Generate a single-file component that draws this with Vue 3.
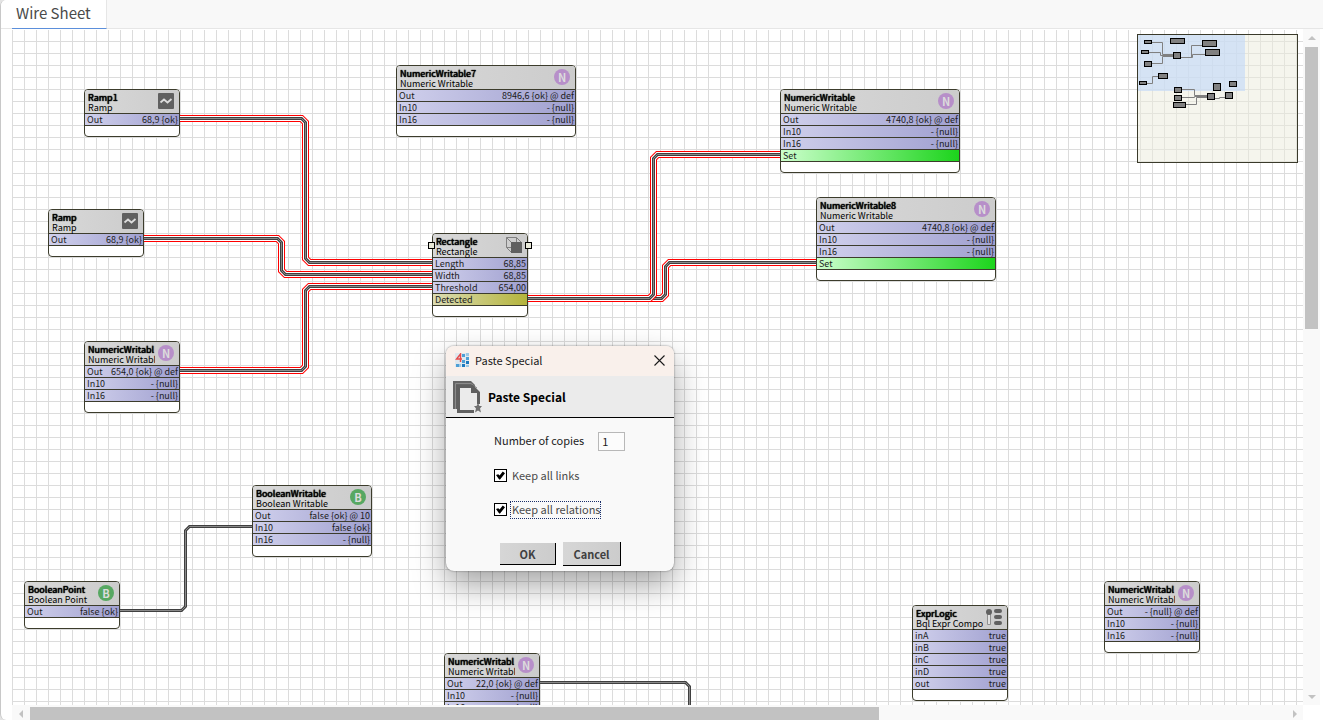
<script setup>
import { reactive, ref } from 'vue'

const nul = '- {null}'
const nodes = [
  { x: 72, y: 60, w: 96, name: 'Ramp1', type: 'Ramp', icon: 'ramp', rows: [['Out', '68,9 {ok}']] },
  { x: 36, y: 180, w: 96, name: 'Ramp', type: 'Ramp', icon: 'ramp', rows: [['Out', '68,9 {ok}']] },
  { x: 72, y: 312, w: 96, name: 'NumericWritabl', type: 'Numeric Writabl', icon: 'N', rows: [['Out', '654,0 {ok} @ def'], ['In10', nul], ['In16', nul]] },
  { x: 384, y: 36, w: 180, name: 'NumericWritable7', type: 'Numeric Writable', icon: 'N', rows: [['Out', '8946,6 {ok} @ def'], ['In10', nul], ['In16', nul]] },
  { x: 768, y: 60, w: 180, name: 'NumericWritable', type: 'Numeric Writable', icon: 'N', rows: [['Out', '4740,8 {ok} @ def'], ['In10', nul], ['In16', nul], ['Set', '', 'green']] },
  { x: 804, y: 168, w: 180, name: 'NumericWritable8', type: 'Numeric Writable', icon: 'N', rows: [['Out', '4740,8 {ok} @ def'], ['In10', nul], ['In16', nul], ['Set', '', 'green']] },
  { x: 420, y: 204, w: 96, name: 'Rectangle', type: 'Rectangle', icon: 'cube', selected: true, rows: [['Length', '68,85'], ['Width', '68,85'], ['Threshold', '654,00'], ['Detected', '', 'olive']] },
  { x: 240, y: 456, w: 120, name: 'BooleanWritable', type: 'Boolean Writable', icon: 'B', rows: [['Out', 'false {ok} @ 10'], ['In10', 'false {ok}'], ['In16', nul]] },
  { x: 12, y: 552, w: 96, name: 'BooleanPoint', type: 'Boolean Point', icon: 'B', rows: [['Out', 'false {ok}']] },
  { x: 432, y: 624, w: 96, name: 'NumericWritabl', type: 'Numeric Writabl', icon: 'N', rows: [['Out', '22,0 {ok} @ def'], ['In10', nul], ['In16', nul]] },
  { x: 900, y: 576, w: 96, name: 'ExprLogic', type: 'Bql Expr Compo', icon: 'expr', rows: [['inA', 'true'], ['inB', 'true'], ['inC', 'true'], ['inD', 'true'], ['out', 'true']] },
  { x: 1092, y: 552, w: 96, name: 'NumericWritabl', type: 'Numeric Writabl', icon: 'N', rows: [['Out', '- {null} @ def'], ['In10', nul], ['In16', nul]] },
]

const wires = [
  { hot: true, d: 'M168 89.5H289.5L293.5 93.5V229.5L297.5 233.5H420' },
  { hot: true, d: 'M132 209.5H265.5L269.5 213.5V241.5L273.5 245.5H420' },
  { hot: true, d: 'M168 341.5H289.5L293.5 337.5V261.5L297.5 257.5H420' },
  { hot: true, d: 'M516 269.5H649.5L653.5 265.5V237.5L657.5 233.5H804' },
  { hot: true, d: 'M516 269.5H637.5L641.5 265.5V129.5L645.5 125.5H768' },
  { hot: false, d: 'M108 581.5H169.5L173.5 577.5V501.5L177.5 497.5H240' },
  { hot: false, d: 'M528 653.5H673.5L677.5 657.5V700' },
]

const mapBoxes = [
  [7, 6, 8, 4], [33, 4, 15, 6], [65, 6, 15, 7], [4, 16, 8, 4], [36, 18, 8, 7], [68, 15, 15, 7],
  [7, 27, 8, 6], [21, 39, 10, 6], [2, 47, 8, 4], [37, 53, 8, 6], [37, 61, 8, 6], [36, 68, 13, 6],
  [70, 59, 8, 7], [76, 49, 8, 8], [88, 58, 8, 7], [92, 47, 8, 6],
]
const mapLines =
  'M15 8.5H25.5V20.5H36M12 18.5H23.5V21.5H36M15 29.5H25.5V22.5H36M44 23.5H54.5V11.5H65M44 23.5H55.5V20.5H68' +
  'M10 49.5H15.5V42.5H21M45 55.5H57.5V61.5H70M45 63.5H57.5V62.5H70M49 70.5H59.5V63.5H70M78 64.5H82.5V63.5H88'

const place = (n) => ({ left: n.x + 'px', top: n.y + 'px', width: n.w + 'px' })

const copies = ref('1')
const keep = reactive({ links: true, relations: true })
</script>

<template>
  <main class="window">
    <nav class="tabs">
      <a class="tab" href="#sheet">Wire Sheet</a>
    </nav>

    <div class="work">
      <section id="sheet" class="sheet">
        <svg class="wires" aria-hidden="true">
          <g v-for="(w, i) in wires" :key="i" fill="none">
            <path v-if="w.hot" :d="w.d" stroke="#ff0000" stroke-width="7" />
            <path v-if="w.hot" :d="w.d" stroke="#ffffff" stroke-width="5" />
            <path :d="w.d" stroke="#404040" stroke-width="3" />
            <path :d="w.d" stroke="#8a8a8a" stroke-width="1" />
          </g>
        </svg>

        <article v-for="n in nodes" :key="n.x + '-' + n.y" class="node" :style="place(n)">
          <header class="head">
            <div class="names">
              <strong>{{ n.name }}</strong>
              <span>{{ n.type }}</span>
            </div>
            <span v-if="n.icon === 'N' || n.icon === 'B'" class="dot" :class="n.icon">{{ n.icon }}</span>
            <svg v-else-if="n.icon === 'ramp'" class="icon" viewBox="0 0 16 16">
              <rect width="16" height="16" rx="1" fill="#606060" />
              <path d="M2.5 9.5L6 6.5L9.5 9.5L13.5 6" fill="none" stroke="#dcdcdc" stroke-width="1.8" />
            </svg>
            <svg v-else-if="n.icon === 'cube'" class="icon" viewBox="0 0 16 16">
              <path d="M0.5 0.5H10.5L15.5 5.5M0.5 0.5V10.5L5.5 15.5M0.5 0.5L5.5 5.5M10.5 0.5V5M0.5 10.5H5" fill="none" stroke="#808080" />
              <rect x="5" y="5" width="11" height="11" fill="#606060" />
            </svg>
            <svg v-else class="icon" viewBox="0 0 16 16">
              <path d="M1.5 5V15.5H4.5V5" fill="#e2e2e2" stroke="#909090" />
              <circle cx="3" cy="3" r="3" fill="#606060" />
              <rect x="8" y="0" width="8" height="4" rx="2" fill="#606060" />
              <rect x="8" y="6" width="8" height="4" rx="2" fill="#606060" />
              <rect x="8" y="12" width="8" height="4" rx="2" fill="#606060" />
            </svg>
          </header>
          <div v-for="r in n.rows" :key="r[0]" class="slot" :class="r[2]">
            <span>{{ r[0] }}</span><span>{{ r[1] }}</span>
          </div>
          <div class="foot"></div>
          <template v-if="n.selected">
            <i class="handle west"></i>
            <i class="handle east"></i>
          </template>
        </article>

        <svg class="map" width="161" height="129" viewBox="0 0 161 129">
          <rect x="0.5" y="0.5" width="160" height="128" fill="#ecebdb" fill-opacity="0.5" />
          <rect x="1" y="1" width="107" height="56" fill="#c3d9f8" fill-opacity="0.65" />
          <path :d="mapLines" fill="none" stroke="#808080" />
          <rect v-for="(b, i) in mapBoxes" :key="i" :x="b[0] + 0.5" :y="b[1] + 0.5" :width="b[2] - 1" :height="b[3] - 1" fill="#808080" stroke="#000000" />
          <rect x="0.5" y="0.5" width="160" height="128" fill="none" stroke="#3a3a2a" />
        </svg>

        <form class="dialog" role="dialog" aria-labelledby="dialog-title" @submit.prevent>
          <div class="titlebar">
            <svg width="14" height="14" viewBox="0 0 14 14" aria-hidden="true">
              <rect width="14" height="14" fill="#dfe8ee" />
              <path d="M7 1h3v3H7zM11 4h3v3h-3zM7 7h3v3H7zM1 11h3v3H1z" fill="#4d9fd6" />
              <path d="M11 8h3v3h-3zM7 11h3v3H7z" fill="#1c78bd" />
              <path d="M11 0h3v3h-3zM11 12h3v2h-3zM4 11h2v3H4z" fill="#9cc8e4" />
              <path d="M5.5 9V1L1.5 6H7" fill="none" stroke="#e64a4a" stroke-width="1.4" />
            </svg>
            <span id="dialog-title">Paste Special</span>
            <button type="button" class="close" aria-label="Close">
              <svg width="11" height="11" viewBox="0 0 11 11"><path d="M0.5 0.5L10.5 10.5M10.5 0.5L0.5 10.5" stroke="#1a1a1a" stroke-width="1.1" /></svg>
            </button>
          </div>
          <div class="banner">
            <svg width="29" height="32" viewBox="0 0 29 32" aria-hidden="true">
              <path d="M0 0H18L22 4V6H4V28H0z" fill="#666666" />
              <path d="M2.5 28V2.500H18L24 7" fill="none" stroke="#8c8c8c" />
              <path d="M3 4H20L27 11V23H24V12H18V7H7V29H21V32H4V28H3z" fill="#606060" />
              <path d="M7 7H18V12H24V23L21 29H7z" fill="#ebebeb" />
              <path d="M25 22l1.500 3h2.500l-2 2.500l1 4l-3-2l-3 2l1-4l-2-2.500h2.500z" fill="#707070" />
            </svg>
            <h1>Paste Special</h1>
          </div>
          <div class="fields">
            <div class="field">
              <label for="copies">Number of copies</label>
              <input id="copies" v-model="copies" type="text" />
            </div>
            <div class="field">
              <input id="links" v-model="keep.links" type="checkbox" />
              <label for="links" class="opt">Keep all links</label>
            </div>
            <div class="field">
              <input id="relations" v-model="keep.relations" type="checkbox" />
              <label for="relations" class="opt focused">Keep all relations</label>
            </div>
          </div>
          <div class="actions">
            <button type="submit" class="btn ok">OK</button>
            <button type="button" class="btn cancel">Cancel</button>
          </div>
        </form>
      </section>

      <div class="bar vertical">
        <button type="button" aria-label="Scroll up"><svg width="8" height="4" viewBox="0 0 8 4"><path d="M0 4L4 0L8 4z" /></svg></button>
        <div class="track"><div class="thumb"></div></div>
        <button type="button" aria-label="Scroll down"><svg width="8" height="4" viewBox="0 0 8 4"><path d="M0 0L4 4L8 0z" /></svg></button>
      </div>
      <div class="bar horizontal">
        <button type="button" aria-label="Scroll left"><svg width="4" height="8" viewBox="0 0 4 8"><path d="M4 0L0 4L4 8z" /></svg></button>
        <div class="track"><div class="thumb"></div></div>
        <button type="button" aria-label="Scroll right"><svg width="4" height="8" viewBox="0 0 4 8"><path d="M0 0L4 4L0 8z" /></svg></button>
      </div>
    </div>
  </main>
</template>

<style>
body {
  background: #e4e4e4;
}
</style>

<style scoped>
.window {
  box-sizing: border-box;
  display: flex;
  flex-direction: column;
  height: 100vh;
  overflow: hidden;
  background: #ffffff;
  border-left: 1px solid #c8c8c8;
  border-radius: 6px 0 0 6px;
  font-family: "Noto Sans CJK SC", "Noto Sans", sans-serif;
  color: #1c1c1c;
}
.window * {
  box-sizing: border-box;
}
.tabs {
  display: flex;
  height: 29px;
  flex: none;
  padding-left: 11px;
  background: linear-gradient(to right, #ffffff 11px, #f8f8f8 11px);
  border-bottom: 1px solid #e6e6e6;
}
.tab {
  height: 29px;
  padding: 0 15px 0 4px;
  background: #ffffff;
  border-bottom: 1px solid #5b8fdb;
  border-right: 1px solid #e6e6e6;
  color: #4a4a4a;
  font-size: 15px;
  line-height: 25px;
  text-decoration: none;
  white-space: nowrap;
}
.work {
  flex: 1;
  min-height: 0;
  display: grid;
  grid-template-columns: 1fr 17px;
  grid-template-rows: 1fr 15px;
  padding: 0 3px 0 11px;
}
.sheet {
  position: relative;
  overflow: hidden;
  background: #ffffff;
}
.sheet::before {
  content: "";
  position: absolute;
  inset: 1px 0 0 0;
  background-image:
    linear-gradient(to right, #dcdcdc 1px, transparent 1px),
    linear-gradient(to bottom, #dcdcdc 1px, transparent 1px);
  background-position: 0 -1px;
  background-size: 12px 12px;
}
.wires {
  position: absolute;
  inset: 0;
  width: 100%;
  height: 100%;
}
.node {
  position: absolute;
  border: 1px solid #3c3c2c;
  border-radius: 4px;
  background: #ffffff;
  font-size: 9px;
}
.head {
  display: flex;
  justify-content: space-between;
  height: 23px;
  padding: 3px 5px 0 3px;
  border-radius: 3px 3px 0 0;
  background: linear-gradient(to right, #d8d8d8, #cccccc);
}
.names {
  flex: 1;
  min-width: 0;
  overflow-x: clip;
  margin-right: 3px;
  line-height: 10px;
  white-space: nowrap;
  color: #000000;
}
.names strong,
.names span {
  display: block;
}
.names strong {
  font-weight: 400;
  text-shadow: 0 0 1px #000000, 0 0 1px #000000;
}
.icon,
.dot {
  flex: none;
  width: 16px;
  height: 16px;
}
.dot {
  border-radius: 50%;
  font-size: 11px;
  font-weight: bold;
  line-height: 16px;
  text-align: center;
  color: #dcdcdc;
}
.dot.N {
  background: #b78fc9;
}
.dot.B {
  background: #57a862;
}
.slot {
  display: flex;
  justify-content: space-between;
  height: 12px;
  padding: 0 1px 0 2px;
  border-top: 1px solid #3c3c2c;
  background: linear-gradient(to right, #d0d0ec, #a0a0d0);
  line-height: 11px;
  white-space: nowrap;
}
.slot.green {
  background: linear-gradient(to right, #ccffcc, #1cd41c);
}
.slot.olive {
  background: linear-gradient(to right, #dcdcb4, #b4b43c);
}
.foot {
  height: 11px;
  border-top: 1px solid #3c3c2c;
}
.handle {
  position: absolute;
  top: 8px;
  width: 7px;
  height: 7px;
  border: 1px solid #000000;
  background: #e8e8d8;
}
.handle.west {
  left: -5px;
}
.handle.east {
  right: -5px;
}
.map {
  position: absolute;
  top: 5px;
  right: 5px;
}
.dialog {
  position: absolute;
  left: 434px;
  top: 317px;
  width: 228px;
  overflow: hidden;
  border-radius: 8px;
  background: #f9f9f9;
  box-shadow: 0 0 2px rgba(0, 0, 0, 0.5), 0 14px 32px rgba(0, 0, 0, 0.36);
  font-size: 11px;
}
.titlebar {
  display: flex;
  align-items: center;
  gap: 6px;
  height: 30px;
  padding: 0 9px 2px 9px;
  background: #f9f0eb;
  color: #1a1a1a;
}
.close {
  display: flex;
  margin-left: auto;
  padding: 0;
  border: 0;
  background: none;
}
.banner {
  display: flex;
  align-items: center;
  gap: 6px;
  height: 42px;
  padding: 0 7px;
  border-bottom: 1px solid #000000;
  background: #ebebeb;
}
.banner h1 {
  margin: 0;
  font-size: 12px;
  font-weight: bold;
  color: #000000;
}
.fields {
  display: flex;
  flex-direction: column;
  gap: 15px;
  padding: 14px 48px 0;
}
.field {
  display: flex;
  align-items: center;
  height: 19px;
  line-height: 14px;
  white-space: nowrap;
}
.field label {
  padding-bottom: 3px;
}
.field input[type="text"] {
  width: 27px;
  height: 19px;
  margin-left: 14px;
  padding: 0 3px 2px;
  border: 1px solid #b8b8b8;
  background: #fcfcfc;
  font-family: inherit;
  font-size: 11px;
  color: #1c1c1c;
}
.field input[type="checkbox"] {
  appearance: none;
  flex: none;
  width: 13px;
  height: 13px;
  margin: 0 3px 0 0;
  border: 1px solid #000000;
  background: #ffffff;
  display: grid;
  place-items: center;
}
.field input[type="checkbox"]:checked::before {
  content: "";
  width: 9px;
  height: 9px;
  background: #000000;
  clip-path: polygon(0 45%, 25% 35%, 40% 50%, 75% 5%, 100% 25%, 45% 95%, 35% 95%);
}
.field .opt {
  padding: 0 0 2px 1px;
  border: 1px solid transparent;
  color: #4a4a4a;
}
.field .focused {
  border: 1px dotted #1a2f6a;
}
.actions {
  display: flex;
  align-items: center;
  justify-content: center;
  gap: 7px;
  padding: 23px 0 5px 1px;
}
.btn {
  padding: 0;
  border: 0 solid #000000;
  border-width: 0 1px 1px 0;
  background: linear-gradient(to right, #d6d6d6, #cccccc);
  font-family: inherit;
  font-size: 11px;
  font-weight: bold;
  line-height: 18px;
  color: #404040;
}
.ok {
  width: 56px;
  height: 22px;
}
.cancel {
  width: 58px;
  height: 24px;
}
.bar {
  display: flex;
  background: #f9f9f9;
}
.bar button {
  display: flex;
  align-items: center;
  justify-content: center;
  flex: none;
  width: 17px;
  height: 17px;
  padding: 0;
  border: 0;
  background: none;
  fill: #c2c2c2;
}
.track {
  flex: 1;
  min-width: 0;
  min-height: 0;
}
.thumb {
  background: #c2c2c2;
}
.vertical {
  flex-direction: column;
}
.vertical .track {
  padding: 1px 2px;
}
.vertical .thumb {
  height: 44%;
}
.horizontal {
  padding-top: 2px;
}
.horizontal button {
  height: 13px;
}
.horizontal .track {
  padding-left: 1px;
}
.horizontal .thumb {
  width: 67.6%;
  height: 100%;
}
</style>
